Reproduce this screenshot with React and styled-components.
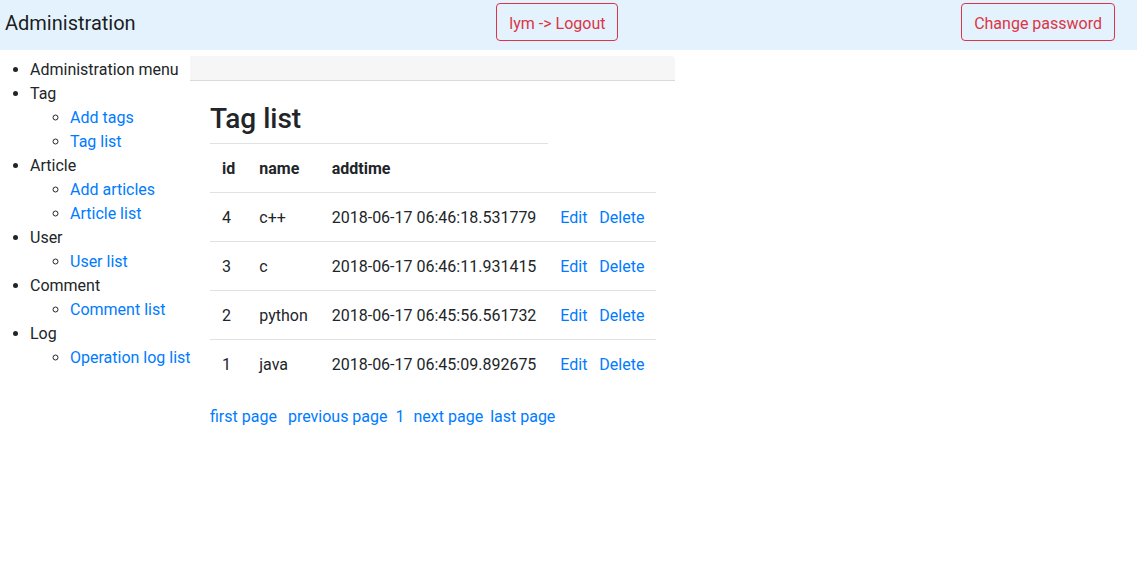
import React from "react";
import styled, { createGlobalStyle } from "styled-components";

const Global = createGlobalStyle`
  html, body { margin: 0; padding: 0; background: #fff; }
  body {
    font-family: Roboto, "Liberation Sans", sans-serif;
    font-size: 16px;
    line-height: 1.5;
    color: #212529;
  }
  * { box-sizing: border-box; }
`;

const NavBar = styled.nav`
  display: flex;
  align-items: center;
  justify-content: space-between;
  height: 50px;
  padding: 0 22px 6px 5px;
  background: #e3f2fd;
`;

const Brand = styled.span`
  font-size: 20px;
  line-height: 30px;
  margin-right: 18px;
  color: rgba(0, 0, 0, 0.9);
  position: relative;
  top: 1px;
`;

const OutlineButton = styled.button`
  font-family: inherit;
  font-size: 16px;
  line-height: 24px;
  padding: 8px 12px 4px;
  border: 1px solid #dc3545;
  border-radius: 4px;
  background: transparent;
  color: #dc3545;
  cursor: pointer;
`;

const Body = styled.div`
  display: flex;
  align-items: flex-start;
`;

const Menu = styled.ul`
  flex: none;
  width: 190px;
  margin: 8px 0 0;
  padding-left: 30px;
  list-style: disc;
  white-space: nowrap;
`;

const SubMenu = styled.ul`
  margin: 0;
  padding-left: 40px;
  list-style: circle;
`;

const Link = styled.a`
  color: #007bff;
  text-decoration: none;
  cursor: pointer;
`;

const Main = styled.main`
  width: 485px;
  flex: none;
  margin-top: 6px;
`;

const TopBar = styled.div`
  height: 25px;
  background: #f6f6f6;
  border-bottom: 1px solid #dadada;
  border-top-right-radius: 4px;
`;

const Content = styled.div`
  padding: 21px 20px 0;
`;

const Title = styled.h3`
  margin: 0 0 7px;
  font-size: 28px;
  font-weight: 500;
  line-height: 1.2;
`;

const Table = styled.table`
  border-collapse: collapse;
  margin-bottom: 17px;
`;

const Th = styled.th`
  padding: 13px 12px 11px;
  text-align: left;
  vertical-align: top;
  font-weight: 700;
  border-top: 1px solid #dee2e6;
`;

const Td = styled.td`
  padding: 13px 12px 11px;
  vertical-align: top;
  border-top: 1px solid #dee2e6;
  white-space: nowrap;
`;

const Pager = styled.div`
  display: flex;
  align-items: baseline;
`;

const PageLink = styled(Link)`
  margin-right: ${(p) => p.$gap || 0}px;
`;

const menu = [
  { title: "Administration menu", items: [] },
  { title: "Tag", items: ["Add tags", "Tag list"] },
  { title: "Article", items: ["Add articles", "Article list"] },
  { title: "User", items: ["User list"] },
  { title: "Comment", items: ["Comment list"] },
  { title: "Log", items: ["Operation log list"] },
];

const rows = [
  { id: 4, name: "c++", time: "2018-06-17 06:46:18.531779" },
  { id: 3, name: "c", time: "2018-06-17 06:46:11.931415" },
  { id: 2, name: "python", time: "2018-06-17 06:45:56.561732" },
  { id: 1, name: "java", time: "2018-06-17 06:45:09.892675" },
];

const pages = [
  { label: "first page", gap: 11 },
  { label: "previous page", gap: 8 },
  { label: "1", gap: 9 },
  { label: "next page", gap: 7 },
  { label: "last page", gap: 0 },
];

export default function App() {
  return (
    <>
      <Global />
      <NavBar>
        <Brand>Administration</Brand>
        <OutlineButton>lym -&gt; Logout</OutlineButton>
        <OutlineButton>Change password</OutlineButton>
      </NavBar>
      <Body>
        <Menu>
          {menu.map((m) => (
            <li key={m.title}>
              {m.title}
              {m.items.length > 0 && (
                <SubMenu>
                  {m.items.map((it) => (
                    <li key={it}>
                      <Link>{it}</Link>
                    </li>
                  ))}
                </SubMenu>
              )}
            </li>
          ))}
        </Menu>
        <Main>
          <TopBar />
          <Content>
            <Title>Tag list</Title>
            <Table>
              <tbody>
                <tr>
                  <Th>id</Th>
                  <Th>name</Th>
                  <Th>addtime</Th>
                </tr>
                {rows.map((r) => (
                  <tr key={r.id}>
                    <Td>{r.id}</Td>
                    <Td>{r.name}</Td>
                    <Td>{r.time}</Td>
                    <Td>
                      <Link>Edit</Link>
                      {"\u00a0 \u00a0"}
                      <Link>Delete</Link>
                    </Td>
                  </tr>
                ))}
              </tbody>
            </Table>
            <Pager>
              {pages.map((p) => (
                <PageLink key={p.label} $gap={p.gap}>
                  {p.label}
                </PageLink>
              ))}
            </Pager>
          </Content>
        </Main>
      </Body>
    </>
  );
}
